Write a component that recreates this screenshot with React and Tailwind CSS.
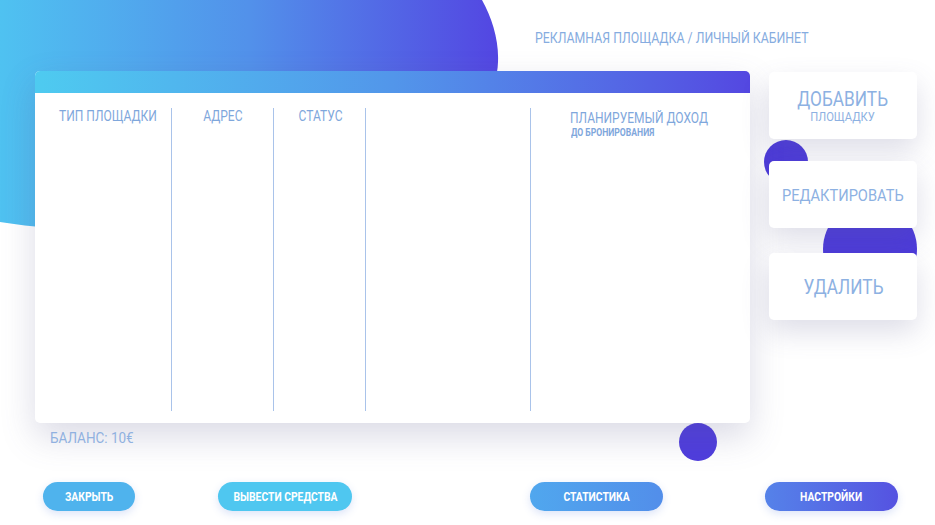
import React from "react";

const FONT = { fontFamily: "Roboto, 'Noto Sans', sans-serif" };

function Blob() {
  return (
    <svg
      className="absolute left-0 top-0"
      width="500"
      height="240"
      viewBox="0 0 500 240"
    >
      <defs>
        <linearGradient id="blobGrad" x1="0" y1="0" x2="1" y2="0">
          <stop offset="0" stopColor="#4fc2f1" />
          <stop offset="0.5" stopColor="#5291ea" />
          <stop offset="1" stopColor="#5346e2" />
        </linearGradient>
      </defs>
      <path
        d="M0 0 H482 C492 18 499 40 498 62 C496 120 430 170 330 200 C230 228 100 238 0 222 Z"
        fill="url(#blobGrad)"
      />
    </svg>
  );
}

// condensed look: Roboto squeezed horizontally
function Condensed({ children, scale = "scale-x-[0.86]", origin = "origin-center" }) {
  return (
    <span className={`inline-block whitespace-nowrap align-top ${scale} ${origin}`}>
      {children}
    </span>
  );
}

function ActionCard({ children }) {
  return (
    <div className="flex h-[67px] flex-col items-center justify-center rounded-[5px] bg-white shadow-[0_12px_28px_rgba(90,90,140,0.2)]">
      {children}
    </div>
  );
}

function PillButton({ children, className }) {
  return (
    <button
      className={`flex h-[29px] items-center justify-center rounded-full text-[12px] font-bold leading-[14px] text-white shadow-[0_3px_8px_rgba(80,120,220,0.2)] ${className}`}
    >
      <Condensed>{children}</Condensed>
    </button>
  );
}

export default function App() {
  const columns = [
    { label: "ТИП ПЛОЩАДКИ", width: "w-[137px]", pad: "pl-[10px]" },
    { label: "АДРЕС", width: "w-[102px]", pad: "" },
    { label: "СТАТУС", width: "w-[92px]", pad: "pl-[2px]" },
    { label: "", width: "w-[165px]", pad: "" },
  ];

  return (
    <div className="relative h-[525px] w-[935px] overflow-hidden bg-white" style={FONT}>
      <Blob />

      {/* decorative dots */}
      <div className="absolute left-[764px] top-[140px] h-[44px] w-[44px] rounded-full bg-[#4d3bdb]" />
      <div className="absolute left-[823px] top-[202px] h-[94px] w-[94px] rounded-full bg-[#4d3bdb]" />
      <div className="absolute left-[679px] top-[423px] h-[38px] w-[38px] rounded-full bg-[#4f3ddd]" />

      <div className="relative z-10 flex flex-col">
        <div className="pl-[535px] pt-[29px] text-[14px] leading-[18px] text-[#86ace0]">
          <Condensed origin="origin-left" scale="scale-x-[0.88]">
            РЕКЛАМНАЯ ПЛОЩАДКА / ЛИЧНЫЙ КАБИНЕТ
          </Condensed>
        </div>

        <div className="mt-[24px] flex items-start">
          {/* main table card */}
          <div className="ml-[35px] flex h-[352px] w-[715px] flex-col rounded-[5px] bg-white shadow-[0_14px_34px_rgba(90,90,140,0.22)]">
            <div className="h-[22px] rounded-t-[5px] bg-gradient-to-r from-[#4ecbf0] via-[#5296ea] to-[#5447e1]" />
            <div className="flex flex-1 pb-[12px] pt-[15px]">
              {columns.map((c, i) => (
                <div
                  key={i}
                  className={`${c.width} ${c.pad} border-r border-[#a9c3ea] text-center text-[14px] leading-[16px] text-[#7fa7dc]`}
                >
                  <Condensed>{c.label}</Condensed>
                </div>
              ))}
              <div className="flex-1 pl-[39px] pt-[2px] text-[#7fa7dc]">
                <div className="text-[15px] leading-[17px]">
                  <Condensed origin="origin-left" scale="scale-x-[0.8]">
                    ПЛАНИРУЕМЫЙ ДОХОД
                  </Condensed>
                </div>
                <div className="pl-[1px] text-[10px] font-bold leading-[12px]">
                  <Condensed origin="origin-left">ДО БРОНИРОВАНИЯ</Condensed>
                </div>
              </div>
            </div>
          </div>

          {/* action cards */}
          <div className="ml-[19px] mt-[1px] flex w-[148px] flex-col">
            <ActionCard>
              <div className="mt-[1px] text-[20px] leading-[20px] text-[#8db1e2]">
                <Condensed>ДОБАВИТЬ</Condensed>
              </div>
              <div className="mt-[1px] text-[13px] leading-[13px] text-[#8db1e2]">
                <Condensed>ПЛОЩАДКУ</Condensed>
              </div>
            </ActionCard>
            <div className="mt-[22px]">
              <ActionCard>
                <div className="text-[17px] leading-[20px] text-[#8db1e2]">
                  <Condensed>РЕДАКТИРОВАТЬ</Condensed>
                </div>
              </ActionCard>
            </div>
            <div className="mt-[25px]">
              <ActionCard>
                <div className="text-[20px] leading-[20px] text-[#8db1e2]">
                  <Condensed>УДАЛИТЬ</Condensed>
                </div>
              </ActionCard>
            </div>
          </div>
        </div>

        <div className="pl-[50px] pt-[6px] text-[15px] leading-[18px] text-[#90b1e0]">
          <Condensed origin="origin-left" scale="scale-x-[0.9]">БАЛАНС: 10€</Condensed>
        </div>

        <div className="mt-[35px] flex items-center">
          <PillButton className="ml-[43px] w-[92px] bg-[#4fb3ed]">ЗАКРЫТЬ</PillButton>
          <PillButton className="ml-[83px] w-[134px] bg-[#4fc7f0]">ВЫВЕСТИ СРЕДСТВА</PillButton>
          <PillButton className="ml-[178px] w-[133px] bg-gradient-to-r from-[#50a7ee] to-[#528eea]">СТАТИСТИКА</PillButton>
          <PillButton className="ml-[102px] w-[133px] bg-gradient-to-r from-[#5582e9] to-[#5552e1]">НАСТРОЙКИ</PillButton>
        </div>
      </div>
    </div>
  );
}
